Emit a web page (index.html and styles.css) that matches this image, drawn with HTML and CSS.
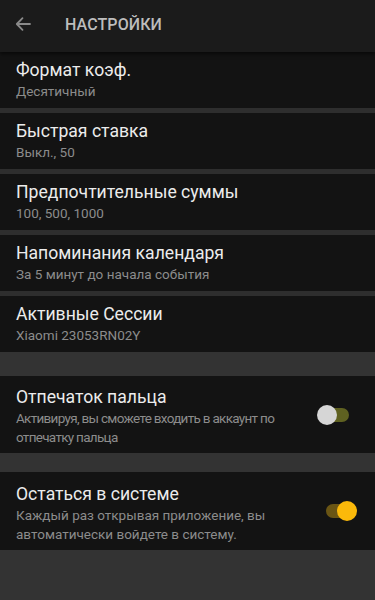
FILE: index.html
```html
<!DOCTYPE html>
<html lang="ru">
<head>
<meta charset="utf-8">
<link rel="stylesheet" href="styles.css">
</head>
<body>
<div class="screen">
  <header class="topbar">
    <svg class="back" width="18" height="18" viewBox="0 0 18 18"><path d="M16 9H3M8.5 3.2L2.8 9l5.7 5.8" fill="none" stroke="#8a8a8a" stroke-width="1.8" stroke-linecap="round" stroke-linejoin="round"/></svg>
    <span class="title">НАСТРОЙКИ</span>
  </header>
  <div class="group">
    <div class="item"><div class="t">Формат коэф.</div><div class="s">Десятичный</div></div>
    <div class="item"><div class="t">Быстрая ставка</div><div class="s">Выкл., 50</div></div>
    <div class="item"><div class="t">Предпочтительные суммы</div><div class="s">100, 500, 1000</div></div>
    <div class="item"><div class="t">Напоминания календаря</div><div class="s">За 5 минут до начала события</div></div>
    <div class="item"><div class="t">Активные Сессии</div><div class="s">Xiaomi 23053RN02Y</div></div>
  </div>
  <div class="item wide gap1">
    <div class="txt"><div class="t">Отпечаток пальца</div><div class="s tight">Активируя, вы сможете входить в аккаунт по отпечатку пальца</div></div>
    <div class="switch off"><span class="track"></span><span class="knob"></span></div>
  </div>
  <div class="item wide gap2">
    <div class="txt"><div class="t">Остаться в системе</div><div class="s">Каждый раз открывая приложение, вы автоматически войдете в систему.</div></div>
    <div class="switch on"><span class="track"></span><span class="knob"></span></div>
  </div>
</div>
</body>
</html>
```
FILE: styles.css
```css
html, body { margin: 0; padding: 0; }
body { background: #333333; font-family: Roboto, "Noto Sans", sans-serif; }
.screen { width: 375px; min-height: 600px; background: #333333; }
.topbar {
  height: 52px; background: #1b1b1b; display: flex; align-items: center;
  padding: 0 0 4px 14px; box-sizing: border-box;
  box-shadow: 0 2px 4px rgba(0,0,0,0.6); position: relative; z-index: 1;
}
.back { flex: none; }
.title { margin-left: 33px; color: #bdbdbd; font-size: 16px; font-weight: 500; letter-spacing: 0.1px; }
.group { display: flex; flex-direction: column; gap: 5px; background: #2e2e2e; }
.item {
  background: #131313; padding: 7px 16px 0 16px; height: 56px; box-sizing: border-box;
}
.t { color: #ececec; font-size: 17.6px; line-height: 23px; }
.s { color: #8c8c8c; font-size: 13.5px; line-height: 19px; }
.s.tight { letter-spacing: -0.7px; }
.wide { height: 77px; display: flex; align-items: flex-start; padding-top: 10px; }
.wide .txt { width: 300px; flex: none; }
.gap1 { margin-top: 24px; }
.gap2 { margin-top: 19px; height: 78px; padding-top: 11px; }
.switch { position: relative; width: 34px; height: 20px; margin-left: 1px; align-self: center; margin-top: -10px; }
.gap2 .switch { margin-left: 10px; margin-top: -11px; }
.track { position: absolute; left: 6px; top: 3px; width: 26px; height: 14px; border-radius: 7px; }
.knob { position: absolute; top: 0; width: 20px; height: 20px; border-radius: 50%; }
.off .track { background: #5f6121; left: 6px; }
.off .knob { left: 0; background: #d6d6d6; }
.on .track { background: #6a5514; left: 0; width: 24px; }
.on .knob { left: 11px; background: #fbb90a; }
```
